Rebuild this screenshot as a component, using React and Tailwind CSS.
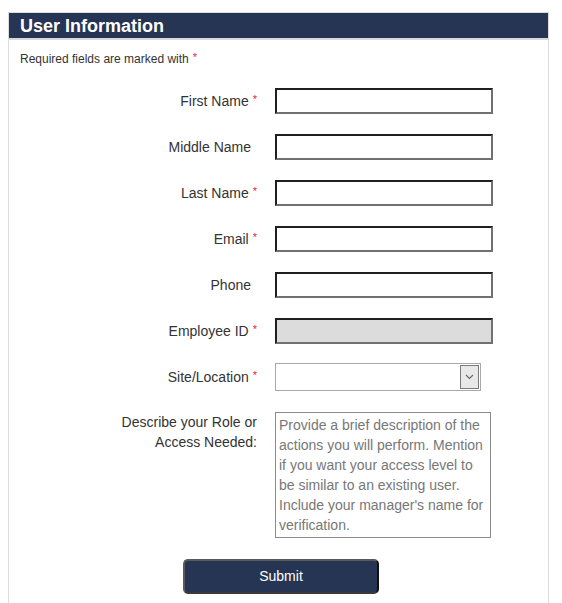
import React from "react";

const fields = [
  { label: "First Name", req: true },
  { label: "Middle Name", req: false },
  { label: "Last Name", req: true },
  { label: "Email", req: true },
  { label: "Phone", req: false },
  { label: "Employee ID", req: true, disabled: true },
];

function Star() {
  return <sup className="text-[#e8174d] text-[11px] relative -top-[3px] ml-[4px]">*</sup>;
}

function Label({ label, req }) {
  return (
    <div className={`w-[248px] text-right text-[14px] text-[#333] ${req ? "" : "pr-[6px]"}`}>
      {label}
      {req && <Star />}
    </div>
  );
}

export default function App() {
  return (
    <div className="min-h-[603px] bg-white pt-[12px] pl-[8px] pr-[13px] font-['Liberation_Sans',Arial,sans-serif]">
      <div className="border border-[#dcdcdc] border-b-0 min-h-[600px]">
        <div className="h-[27px] bg-[#263554] border-b-2 border-[#d9d9d9] pl-[11px] flex items-center">
          <h2 className="text-white font-bold text-[18px] leading-none">User Information</h2>
        </div>

        <p className="mt-[10px] pl-[11px] text-[12px] text-[#333]">
          Required fields are marked with
          <sup className="text-[#e8174d] text-[11px] relative -top-[2px] ml-[4px]">*</sup>
        </p>

        <div className="mt-[10px]">
          {fields.map((f) => (
            <div key={f.label} className="h-[46px] flex items-center">
              <Label label={f.label} req={f.req} />
              <input
                type="text"
                disabled={f.disabled}
                className={`ml-[18px] w-[218px] h-[26px] border-2 border-t-[#1f1f1f] border-l-[#1f1f1f] border-b-[#717171] border-r-[#717171] outline-none ${f.disabled ? "bg-[#dcdcdc]" : "bg-white"}`}
              />
            </div>
          ))}

          <div className="h-[46px] flex items-center">
            <Label label="Site/Location" req />
            <div className="ml-[18px] w-[206px] h-[28px] border border-[#a9a9a9] bg-white flex items-center justify-end pr-[1px]">
              <div className="w-[19px] h-[24px] border border-[#7a7a7a] bg-[#e8e8e8] flex items-center justify-center">
                <svg width="9" height="6" viewBox="0 0 9 6">
                  <path d="M1 1 L4.5 4.5 L8 1" fill="none" stroke="#6b6b6b" strokeWidth="1.2" />
                </svg>
              </div>
            </div>
          </div>

          <div className="flex items-start pt-[12px]">
            <div className="w-[248px] text-right text-[14px] leading-[20px] text-[#333]">
              Describe your Role or
              <br />
              Access Needed:
            </div>
            <textarea
              rows={6}
              placeholder="Provide a brief description of the actions you will perform. Mention if you want your access level to be similar to an existing user. Include your manager's name for verification."
              className="ml-[18px] w-[216px] h-[126px] border border-[#8a8a8a] px-[3px] py-[2px] text-[14px] leading-[20px] resize-none outline-none placeholder:text-[#777] overflow-hidden"
            />
          </div>

          <button className="mt-[21px] ml-[174px] w-[196px] h-[35px] bg-[#263554] text-white text-[14px] rounded-[5px] border-2 border-t-[#5a5a5a] border-l-[#5a5a5a] border-b-[#3a3a3a] border-r-[#111]">
            Submit
          </button>
        </div>
      </div>
    </div>
  );
}
